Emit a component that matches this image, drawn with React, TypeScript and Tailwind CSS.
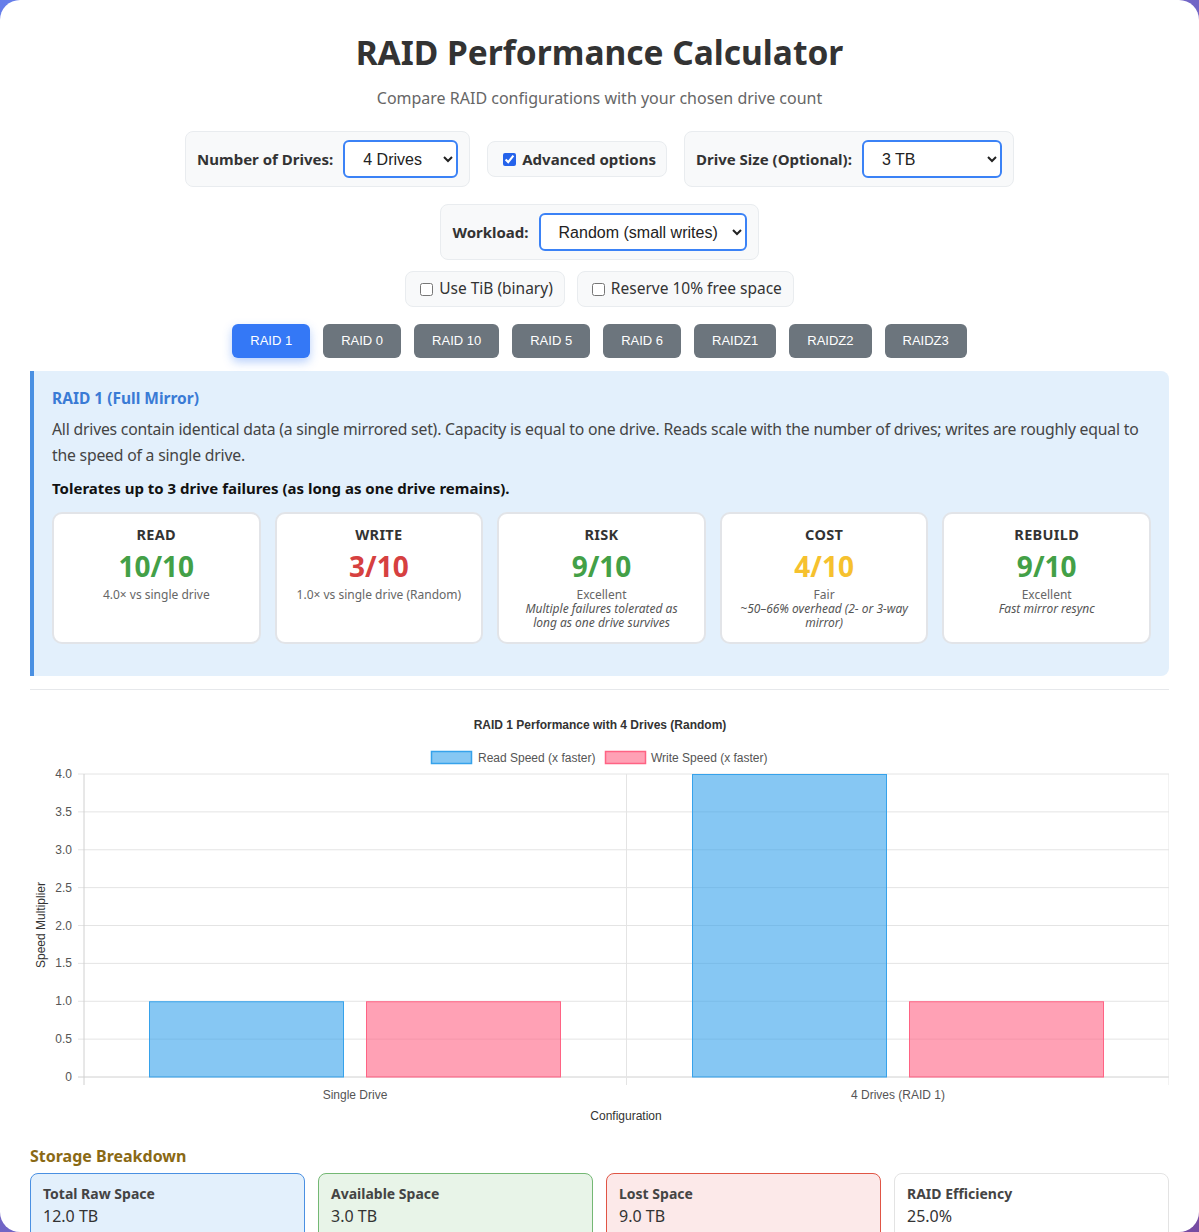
import React from "react";

const FONT = { fontFamily: '"Noto Sans", "Open Sans", sans-serif' };
const ARIAL = '"Liberation Sans", Arial, sans-serif';

function Chart() {
  const top = 774;
  const bottom = 1077;
  const step = (bottom - top) / 8;
  const ticks = ["4.0", "3.5", "3.0", "2.5", "2.0", "1.5", "1.0", "0.5", "0"];
  const yOf = (v: number) => bottom - (v / 4) * (bottom - top);
  const bars = [
    { x: 149, w: 194, v: 1, c: "read" },
    { x: 366, w: 194, v: 1, c: "write" },
    { x: 692, w: 194, v: 4, c: "read" },
    { x: 909, w: 194, v: 1, c: "write" },
  ];
  return (
    <svg
      width={1139}
      height={440}
      viewBox="30 700 1139 440"
      className="block"
      style={{ fontFamily: ARIAL }}
    >
      <text x={600} y={729} textAnchor="middle" fontSize={12} fontWeight={700} fill="#333">
        RAID 1 Performance with 4 Drives (Random)
      </text>
      <rect x={431.5} y={751.5} width={40} height={12} fill="rgba(54,162,235,0.6)" stroke="rgb(54,162,235)" strokeWidth={1.5} />
      <text x={478} y={762} fontSize={12} fill="#555">Read Speed (x faster)</text>
      <rect x={605.5} y={751.5} width={40} height={12} fill="rgba(255,99,132,0.6)" stroke="rgb(255,99,132)" strokeWidth={1.5} />
      <text x={651} y={762} fontSize={12} fill="#555">Write Speed (x faster)</text>

      {ticks.map((t, i) => {
        const y = top + i * step;
        return (
          <g key={t}>
            <line x1={78} x2={1169} y1={y} y2={y} stroke={i === 8 ? "#d0d0d0" : "#e4e4e4"} strokeWidth={1} />
            <text x={72} y={y + 4} textAnchor="end" fontSize={12} fill="#555">
              {t}
            </text>
          </g>
        );
      })}
      {[84, 626.5, 1169].map((x) => (
        <line key={x} x1={x} x2={x} y1={top} y2={1085} stroke={x === 84 ? "#d0d0d0" : "#e4e4e4"} strokeWidth={1} />
      ))}

      {bars.map((b, i) => {
        const y = yOf(b.v);
        return (
          <rect
            key={i}
            x={b.x + 0.5}
            y={y + 0.5}
            width={b.w}
            height={bottom - y - 0.5}
            fill={b.c === "read" ? "rgba(54,162,235,0.6)" : "rgba(255,99,132,0.6)"}
            stroke={b.c === "read" ? "rgb(54,162,235)" : "rgb(255,99,132)"}
            strokeWidth={1}
          />
        );
      })}

      <text x={355} y={1099} textAnchor="middle" fontSize={12} fill="#555">Single Drive</text>
      <text x={898} y={1099} textAnchor="middle" fontSize={12} fill="#555">4 Drives (RAID 1)</text>
      <text x={626} y={1120} textAnchor="middle" fontSize={12} fill="#333">Configuration</text>
      <text
        x={0}
        y={0}
        fontSize={12}
        fill="#333"
        textAnchor="middle"
        transform="translate(45 925) rotate(-90)"
      >
        Speed Multiplier
      </text>
    </svg>
  );
}

function MetricCard({
  label,
  value,
  color,
  sub,
  note,
}: {
  label: string;
  value: string;
  color: string;
  sub: string;
  note?: string;
}) {
  return (
    <div className="h-[132px] rounded-[10px] border-2 border-[#e2e4e8] bg-white px-[14px] pt-[10px] text-center">
      <div className="text-[14.5px] font-bold leading-[20px] tracking-[0.3px] text-[#333]">{label}</div>
      <div className="mt-[4px] text-[28px] font-bold leading-[36px]" style={{ color }}>
        {value}
      </div>
      <div className="mt-[4px] text-[12px] leading-[14px] text-[#666]">{sub}</div>
      {note && <div className="text-[12px] italic leading-[14px] text-[#555]">{note}</div>}
    </div>
  );
}

function StorageCard({
  label,
  value,
  cls,
}: {
  label: string;
  value: string;
  cls: string;
}) {
  return (
    <div className={`h-[70px] rounded-[8px] border px-[12px] pt-[9px] ${cls}`}>
      <div className="text-[14px] font-bold leading-[22px] text-[#444]">{label}</div>
      <div className="text-[16px] leading-[23px] text-[#333]">{value}</div>
    </div>
  );
}

export default function App() {
  const buttons = ["RAID 1", "RAID 0", "RAID 10", "RAID 5", "RAID 6", "RAIDZ1", "RAIDZ2", "RAIDZ3"];
  return (
    <div className="min-h-screen bg-gradient-to-br from-[#667eea] to-[#764ba2]" style={FONT}>
      <div className="h-[1232px] overflow-hidden rounded-[20px] bg-white px-[30px] pt-[30px]">
        <h1 className="text-center text-[33.5px] font-bold leading-[44px] text-[#333]">
          RAID Performance Calculator
        </h1>
        <p className="mt-[12px] text-center text-[16px] leading-[24px] text-[#666]">
          Compare RAID configurations with your chosen drive count
        </p>

        <div className="mt-[21px] flex items-center justify-center gap-[17px]">
          <div className="flex h-[56px] items-center gap-[10px] rounded-[8px] border border-[#e9ecef] bg-[#f8f9fa] px-[11px]">
            <span className="text-[15px] font-bold text-[#333]">Number of Drives:</span>
            <select
              defaultValue="4"
              className="h-[38px] w-[115px] rounded-[6px] border-2 border-[#3b82f6] bg-white pl-[14px] pr-1 text-[16px] text-[#222]"
              style={{ fontFamily: ARIAL }}
            >
              <option value="4">4 Drives</option>
            </select>
          </div>
          <label className="flex h-[36px] items-center gap-[6px] rounded-[8px] border border-[#e9ecef] bg-[#f8f9fa] pl-[15px] pr-[10px]">
            <input type="checkbox" defaultChecked className="h-[13px] w-[13px] accent-[#2563eb]" />
            <span className="text-[15px] font-bold text-[#333]">Advanced options</span>
          </label>
          <div className="flex h-[56px] items-center gap-[10px] rounded-[8px] border border-[#e9ecef] bg-[#f8f9fa] px-[11px]">
            <span className="text-[15px] font-bold text-[#333]">Drive Size (Optional):</span>
            <select
              defaultValue="3"
              className="h-[38px] w-[140px] rounded-[6px] border-2 border-[#3b82f6] bg-white pl-[14px] pr-1 text-[16px] text-[#222]"
              style={{ fontFamily: ARIAL }}
            >
              <option value="3">3 TB</option>
            </select>
          </div>
        </div>

        <div className="mt-[17px] flex justify-center">
          <div className="flex h-[56px] items-center gap-[10px] rounded-[8px] border border-[#e9ecef] bg-[#f8f9fa] px-[11px]">
            <span className="text-[15px] font-bold text-[#333]">Workload:</span>
            <select
              defaultValue="r"
              className="h-[38px] w-[208px] rounded-[6px] border-2 border-[#3b82f6] bg-white pl-[14px] pr-1 text-[16px] text-[#222]"
              style={{ fontFamily: ARIAL }}
            >
              <option value="r">Random (small writes)</option>
            </select>
          </div>
        </div>

        <div className="mt-[11px] flex justify-center gap-[12px]">
          <label className="flex h-[36px] items-center gap-[6px] rounded-[8px] border border-[#e9ecef] bg-[#f8f9fa] pl-[14px] pr-[11px]">
            <input type="checkbox" className="h-[13px] w-[13px]" />
            <span className="text-[15.5px] text-[#333]">Use TiB (binary)</span>
          </label>
          <label className="flex h-[36px] items-center gap-[6px] rounded-[8px] border border-[#e9ecef] bg-[#f8f9fa] pl-[14px] pr-[11px]">
            <input type="checkbox" className="h-[13px] w-[13px]" />
            <span className="text-[15.5px] text-[#333]">Reserve 10% free space</span>
          </label>
        </div>

        <div className="mt-[17px] flex justify-center gap-[13px]">
          {buttons.map((b, i) => (
            <button
              key={b}
              className={
                i === 0
                  ? "h-[34px] rounded-[6px] bg-[#3478f6] px-[18px] text-[13px] leading-[34px] text-white shadow-[0_4px_10px_rgba(52,120,246,0.35)]"
                  : "h-[34px] rounded-[6px] bg-[#6c757d] px-[18px] text-[13px] leading-[34px] text-white"
              }
              style={{ fontFamily: ARIAL }}
            >
              {b}
            </button>
          ))}
        </div>

        <div className="mt-[13px] h-[305px] rounded-r-[8px] border-l-4 border-[#4a90e2] bg-[#e3f0fc] pl-[18px] pr-[18px] pt-[15px]">
          <h3 className="text-[15.5px] font-bold leading-[24px] text-[#3a7bd5]">RAID 1 (Full Mirror)</h3>
          <p className="mt-[6px] text-[15.75px] leading-[26px] tracking-[-0.2px] text-[#444]">
            All drives contain identical data (a single mirrored set). Capacity is equal to one drive. Reads
            scale with the number of drives; writes are roughly equal to the speed of a single drive.
          </p>
          <p className="mt-[8px] text-[15px] font-bold leading-[24px] text-[#111]">
            Tolerates up to 3 drive failures (as long as one drive remains).
          </p>
          <div className="mt-[12px] grid grid-cols-5 gap-[14px]">
            <MetricCard label="READ" value="10/10" color="#43a047" sub="4.0× vs single drive" />
            <MetricCard label="WRITE" value="3/10" color="#d64040" sub="1.0× vs single drive (Random)" />
            <MetricCard
              label="RISK"
              value="9/10"
              color="#43a047"
              sub="Excellent"
              note="Multiple failures tolerated as long as one drive survives"
            />
            <MetricCard
              label="COST"
              value="4/10"
              color="#f6c12e"
              sub="Fair"
              note="~50–66% overhead (2- or 3-way mirror)"
            />
            <MetricCard label="REBUILD" value="9/10" color="#43a047" sub="Excellent" note="Fast mirror resync" />
          </div>
        </div>

        <div className="mt-[13px] h-px bg-[#e6e8eb]" />

        <div className="mt-[10px]">
          <Chart />
        </div>

        <h3 className="mt-[4px] text-[16px] font-bold leading-[24px] text-[#8a6914]">Storage Breakdown</h3>
        <div className="mt-[5px] grid grid-cols-4 gap-[13px]">
          <StorageCard label="Total Raw Space" value="12.0 TB" cls="border-[#4a90e2] bg-[#e3f0fc]" />
          <StorageCard label="Available Space" value="3.0 TB" cls="border-[#74b874] bg-[#e8f4e8]" />
          <StorageCard label="Lost Space" value="9.0 TB" cls="border-[#e05545] bg-[#fce9e9]" />
          <StorageCard label="RAID Efficiency" value="25.0%" cls="border-[#e3e3e3] bg-white" />
        </div>
      </div>
    </div>
  );
}
